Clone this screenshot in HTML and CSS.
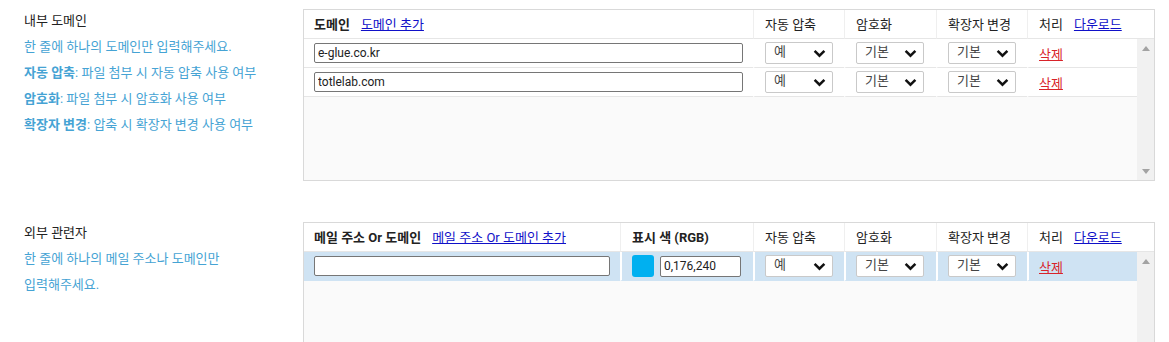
FILE: index.html
```html
<!DOCTYPE html>
<html lang="ko">
<head>
    <meta charset="UTF-8">
    <meta name="viewport" content="width=device-width, initial-scale=1.0">
    <title>도메인 설정</title>
    <link rel="stylesheet" href="styles.css">
</head>
<body>
    <div class="page">
        <section class="group">
            <div class="desc">
                <p class="title">내부 도메인</p>
                <p class="hint">한 줄에 하나의 도메인만 입력해주세요.</p>
                <p class="hint"><b>자동 압축</b>: 파일 첨부 시 자동 압축 사용 여부</p>
                <p class="hint"><b>암호화</b>: 파일 첨부 시 암호화 사용 여부</p>
                <p class="hint"><b>확장자 변경</b>: 압축 시 확장자 변경 사용 여부</p>
            </div>

            <div class="grid-box">
                <table class="grid-head">
                    <colgroup>
                        <col style="width: 449px"><col style="width: 91px"><col style="width: 92px"><col style="width: 91px"><col>
                    </colgroup>
                    <tr>
                        <th><b>도메인</b><a href="#" class="link">도메인 추가</a></th>
                        <th>자동 압축</th>
                        <th>암호화</th>
                        <th>확장자 변경</th>
                        <th>처리<a href="#" class="link">다운로드</a></th>
                    </tr>
                </table>
                <div class="grid-body">
                    <div class="rows">
                        <table class="grid-rows">
                            <colgroup>
                                <col style="width: 449px"><col style="width: 91px"><col style="width: 92px"><col style="width: 91px"><col>
                            </colgroup>
                            <tr>
                                <td><input type="text" class="text-input wide" value="e-glue.co.kr"></td>
                                <td><div class="select">예<svg viewBox="0 0 12 8"><path d="M1.5 1.5 6 6l4.5-4.5"/></svg></div></td>
                                <td><div class="select">기본<svg viewBox="0 0 12 8"><path d="M1.5 1.5 6 6l4.5-4.5"/></svg></div></td>
                                <td><div class="select">기본<svg viewBox="0 0 12 8"><path d="M1.5 1.5 6 6l4.5-4.5"/></svg></div></td>
                                <td><a href="#" class="delete">삭제</a></td>
                            </tr>
                            <tr>
                                <td><input type="text" class="text-input wide" value="totlelab.com"></td>
                                <td><div class="select">예<svg viewBox="0 0 12 8"><path d="M1.5 1.5 6 6l4.5-4.5"/></svg></div></td>
                                <td><div class="select">기본<svg viewBox="0 0 12 8"><path d="M1.5 1.5 6 6l4.5-4.5"/></svg></div></td>
                                <td><div class="select">기본<svg viewBox="0 0 12 8"><path d="M1.5 1.5 6 6l4.5-4.5"/></svg></div></td>
                                <td><a href="#" class="delete">삭제</a></td>
                            </tr>
                        </table>
                    </div>
                    <div class="scrollbar">
                        <svg viewBox="0 0 8 5"><path d="M0 5 4 0l4 5z"/></svg>
                        <svg viewBox="0 0 8 5"><path d="M0 0h8L4 5z"/></svg>
                    </div>
                </div>
            </div>
        </section>

        <section class="group second">
            <div class="desc">
                <p class="title">외부 관련자</p>
                <p class="hint">한 줄에 하나의 메일 주소나 도메인만</p>
                <p class="hint">입력해주세요.</p>
            </div>

            <div class="grid-box">
                <table class="grid-head">
                    <colgroup>
                        <col style="width: 316px"><col style="width: 133px"><col style="width: 91px"><col style="width: 92px"><col style="width: 91px"><col>
                    </colgroup>
                    <tr>
                        <th><b>메일 주소 Or 도메인</b><a href="#" class="link">메일 주소 Or 도메인 추가</a></th>
                        <th><b>표시 색 (RGB)</b></th>
                        <th>자동 압축</th>
                        <th>암호화</th>
                        <th>확장자 변경</th>
                        <th>처리<a href="#" class="link">다운로드</a></th>
                    </tr>
                </table>
                <div class="grid-body">
                    <div class="rows">
                        <table class="grid-rows">
                            <colgroup>
                                <col style="width: 316px"><col style="width: 133px"><col style="width: 91px"><col style="width: 92px"><col style="width: 91px"><col>
                            </colgroup>
                            <tr class="selected">
                                <td><input type="text" class="text-input wide" value=""></td>
                                <td>
                                    <div class="color-cell">
                                        <span class="swatch" style="background: rgb(0,176,240)"></span>
                                        <input type="text" class="text-input rgb" value="0,176,240">
                                    </div>
                                </td>
                                <td><div class="select">예<svg viewBox="0 0 12 8"><path d="M1.5 1.5 6 6l4.5-4.5"/></svg></div></td>
                                <td><div class="select">기본<svg viewBox="0 0 12 8"><path d="M1.5 1.5 6 6l4.5-4.5"/></svg></div></td>
                                <td><div class="select">기본<svg viewBox="0 0 12 8"><path d="M1.5 1.5 6 6l4.5-4.5"/></svg></div></td>
                                <td><a href="#" class="delete">삭제</a></td>
                            </tr>
                        </table>
                    </div>
                    <div class="scrollbar">
                        <svg viewBox="0 0 8 5"><path d="M0 5 4 0l4 5z"/></svg>
                        <svg viewBox="0 0 8 5"><path d="M0 0h8L4 5z"/></svg>
                    </div>
                </div>
            </div>
        </section>
    </div>
</body>
</html>
```

FILE: styles.css
```css
:root {
    --text-color: #222;
    --hint-color: #45a3d4;
    --border-color: #d9d9d9;
    --line-color: #e6e6e6;
    --link-color: #1010c8;
    --delete-color: #d8232a;
    --selected-color: #cfe3f3;
    --body-bg: #fafafa;
}

* {
    margin: 0;
    padding: 0;
    box-sizing: border-box;
}

body {
    background: #fff;
    color: var(--text-color);
    font-family: Roboto, "Noto Sans CJK KR", sans-serif;
    font-size: 13px;
}

.page {
    padding-top: 7px;
}

.group {
    display: flex;
    align-items: flex-start;
}

.group.second {
    margin-top: 38px;
}

.desc {
    width: 303px;
    flex-shrink: 0;
    padding: 1px 0 0 24px;
}

.desc p {
    line-height: 26px;
    white-space: nowrap;
}

.desc .hint {
    color: var(--hint-color);
}

.desc .hint b {
    font-weight: bold;
}

.grid-box {
    width: 852px;
    height: 172px;
    margin-top: 2px;
    border: 1px solid var(--border-color);
    display: flex;
    flex-direction: column;
    background: var(--body-bg);
}

.second .grid-box {
    margin-top: 3px;
}

table {
    border-collapse: separate;
    border-spacing: 0;
    table-layout: fixed;
}

.grid-head {
    width: 100%;
    background: #fff;
}

.grid-head th {
    height: 29px;
    text-align: left;
    font-weight: normal;
    padding: 0 6px 1px 11px;
    border-bottom: 1px solid var(--line-color);
    border-left: 1px solid #efefef;
    white-space: nowrap;
}

.grid-head th:first-child {
    border-left: none;
    padding-left: 10px;
}

.grid-head th b {
    font-weight: bold;
}

.link {
    color: var(--link-color);
    margin-left: 11px;
}

.grid-body {
    flex: 1;
    display: flex;
    min-height: 0;
}

.rows {
    flex: 1;
}

.grid-rows {
    width: 100%;
}

.grid-rows td {
    height: 29px;
    background: #fff;
    padding: 0 8px 0 10px;
    border-bottom: 1px solid var(--line-color);
    border-left: 2px solid #fff;
    white-space: nowrap;
}

.grid-rows td:first-child {
    border-left: none;
    padding-right: 10px;
}

.grid-rows .selected td {
    background: var(--selected-color);
    border-bottom-color: var(--selected-color);
}

.text-input {
    height: 20px;
    border: 1px solid #767676;
    border-radius: 2px;
    padding: 0 3px;
    font-family: Roboto, "Noto Sans CJK KR", sans-serif;
    font-size: 12px;
    color: #222;
    background: #fff;
    display: block;
}

.text-input.wide {
    width: 100%;
}

.select {
    position: relative;
    width: 68px;
    height: 22px;
    border: 1px solid #c9c9c9;
    border-radius: 2px;
    background: #fff;
    line-height: 17px;
    padding-left: 8px;
    color: #444;
}

.select svg {
    position: absolute;
    right: 6px;
    top: 6px;
    width: 13px;
    height: 9px;
    fill: none;
    stroke: #111;
    stroke-width: 2.3;
}

.delete {
    color: var(--delete-color);
}

.color-cell {
    display: flex;
    align-items: center;
    gap: 6px;
}

.swatch {
    width: 22px;
    height: 22px;
    border-radius: 3px;
    flex-shrink: 0;
}

.text-input.rgb {
    width: 81px;
    height: 21px;
}

.scrollbar {
    width: 17px;
    background: #f1f1f1;
    display: flex;
    flex-direction: column;
    justify-content: space-between;
    align-items: center;
    padding: 7px 0 6px;
}

.scrollbar svg {
    width: 8px;
    height: 5px;
    fill: #a3a3a3;
}
```
